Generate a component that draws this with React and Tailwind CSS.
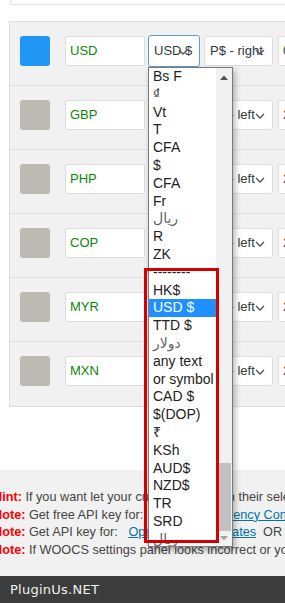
import React from "react";

const Chevron = ({ className }) => (
  <svg className={className} width="10" height="6" viewBox="0 0 10 6" fill="none">
    <path d="M1 1l4 4 4-4" stroke="#555" strokeWidth="1.4" />
  </svg>
);

const rows = [
  { code: "USD", swatch: "bg-[#2196f3]", sym: "USD $", pos: "P$ - right", val: "0", active: true },
  { code: "GBP", swatch: "bg-[#bcbbb3]", sym: "£", pos: "P$ - left", val: "2" },
  { code: "PHP", swatch: "bg-[#bcbbb3]", sym: "₱", pos: "P$ - left", val: "2" },
  { code: "COP", swatch: "bg-[#bcbbb3]", sym: "$", pos: "P$ - left", val: "2" },
  { code: "MYR", swatch: "bg-[#bcbbb3]", sym: "RM", pos: "P$ - left", val: "2" },
  { code: "MXN", swatch: "bg-[#bcbbb3]", sym: "$", pos: "P$ - left", val: "2" },
];

const items = [
  "Bs F", "₫", "Vt", "T", "CFA", "$", "CFA", "Fr", "ريال", "R", "ZK", "--------",
  "HK$", "USD $", "TTD $", "دولار", "any text", "or symbol", "CAD $", "$(DOP)", "₹",
  "KSh", "AUD$", "NZD$", "TR", "SRD", "ريال",
];

const isArabic = (s) => /[\u0600-\u06FF]/.test(s);

export default function App() {
  return (
    <div className="relative w-[285px] h-[603px] overflow-hidden bg-white font-['Liberation_Sans',Arial,sans-serif]">
      <div className="ml-[10px] h-[5px] border-l border-b border-[#e2e4e7] rounded-bl-[2px] bg-white" />

      <div className="mt-[16px] ml-[9px] w-[330px] border border-[#dcdcdc] bg-[#f1f1f1]">
        {rows.map((r, i) => (
          <div
            key={i}
            className={`flex items-start h-[64px] pt-[14px] pl-[10px] ${i < rows.length - 1 ? "border-b border-[#e0e0e0]" : "h-[63px]"}`}
          >
            <div className={`w-[30px] h-[30px] rounded-[3px] shrink-0 ${r.swatch}`} />
            <div className="ml-[15px] w-[80px] h-[30px] shrink-0 bg-white border border-[#dddddd] rounded-[2px] pl-[4px] flex items-center text-[13px] text-[#0b870b]">
              {r.code}
            </div>
            <div
              className={`relative ml-[3px] w-[52px] shrink-0 bg-white border rounded-[3px] overflow-hidden flex items-center pl-[5px] text-[13px] text-[#32373c] whitespace-nowrap ${r.active ? "h-[32px] -mt-px border-[#5b9dd9]" : "h-[30px] border-[#dddddd]"}`}
            >
              {r.sym}
              <Chevron className="absolute right-[11px] top-[13px]" />
            </div>
            <div className="relative ml-[4px] w-[69px] h-[30px] shrink-0 bg-white border border-[#dddddd] rounded-[3px] overflow-hidden flex items-center pl-[5px] text-[13px] text-[#32373c] whitespace-nowrap">
              {r.pos}
              <Chevron className="absolute right-[7px] top-[12px]" />
            </div>
            <div className="ml-[5px] w-[60px] h-[30px] shrink-0 bg-white border border-[#dddddd] rounded-[2px] pl-[4px] flex items-center text-[13px] text-[#32373c]">
              {r.val}
            </div>
          </div>
        ))}
      </div>

      <div className="mt-[63px] h-[106px] bg-[#f1f1f1] pt-[19px] overflow-hidden">
        <div className="-ml-[7px] whitespace-nowrap text-[12.7px] leading-[17.5px] text-[#444]">
          <div>
            <b className="text-[#ff0000]">Hint:</b> If you want let your customers pay&nbsp; in their selected currency in the shop
          </div>
          <div>
            <b className="text-[#ff0000]">Note:</b> Get free API key for:&nbsp;&nbsp; The Free{" "}
            <span className="text-[#0073aa] underline">Currency Converter API</span>
          </div>
          <div>
            <b className="text-[#ff0000]">Note:</b> Get API key for:&nbsp;&nbsp;{" "}
            <span className="text-[#0073aa] underline">Open Exchange Rates</span>&nbsp; OR&nbsp; Fixer
          </div>
          <div>
            <b className="text-[#ff0000]">Note:</b> If WOOCS settings panel looks incorrect or your site works slowly
          </div>
        </div>
      </div>

      <div className="h-[28px] bg-[#3c3c3c] pl-[10px] text-[13px] leading-[28px] tracking-[0.25px] text-[#f2f2f2] font-['DejaVu_Sans',sans-serif]">
        PluginUs.NET
      </div>

      {/* open select dropdown */}
      <div className="absolute left-[148px] top-[67px] w-[85px] h-[480px] bg-white border border-[#7a7a7a] shadow-[2px_3px_6px_rgba(0,0,0,0.3)] flex overflow-hidden">
        <div className="w-[67px] shrink-0 overflow-hidden">
          {items.map((it, i) => (
            <div
              key={i}
              className={`h-[17.8px] leading-[17.8px] pl-[4px] text-[14px] whitespace-nowrap ${i === 13 ? "bg-[#1e90ff] text-white" : isArabic(it) ? "text-[#666] font-['DejaVu_Sans',sans-serif] text-[12px]" : "text-[#222]"}`}
            >
              {it}
            </div>
          ))}
        </div>
        <div className="relative w-[16px] shrink-0 bg-[#f1f1f1]">
          <svg className="absolute left-[4px] top-[7px]" width="8" height="5" viewBox="0 0 8 5">
            <path d="M0 5L4 0.5L8 5Z" fill="#505050" />
          </svg>
          <div className="absolute left-0 top-[395px] w-[15px] h-[68px] bg-[#c1c1c1]" />
          <svg className="absolute left-[4px] top-[468px]" width="8" height="5" viewBox="0 0 8 5">
            <path d="M0 0L8 0L4 4.5Z" fill="#a3a3a3" />
          </svg>
        </div>
      </div>

      {/* red annotation box */}
      <div className="absolute left-[144px] top-[268px] w-[75px] h-[275px] border-[3px] border-[#d40000]" />
    </div>
  );
}
